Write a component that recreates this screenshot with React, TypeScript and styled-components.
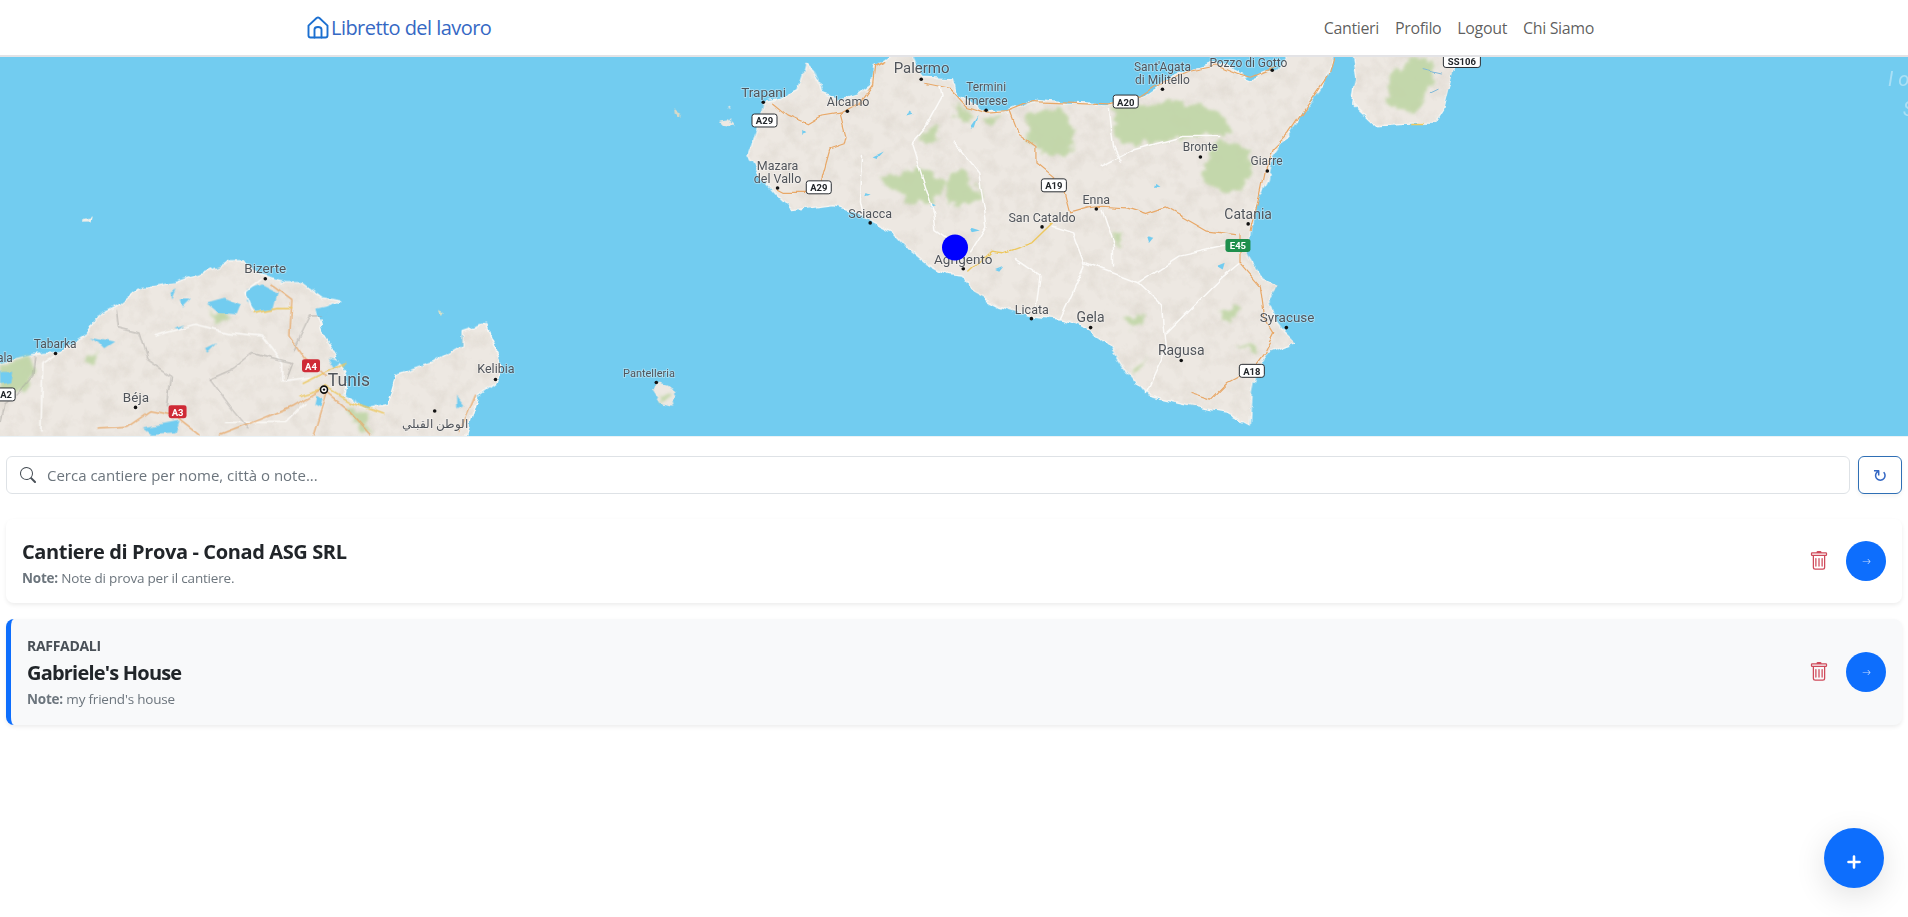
import React from "react";
import styled, { createGlobalStyle } from "styled-components";
import { BsSearch, BsTrash, BsArrowRight, BsPlusLg } from "react-icons/bs";

const Global = createGlobalStyle`
  html, body { margin: 0; padding: 0; background: #fff; }
  body { font-family: "Open Sans", "Noto Sans", "Liberation Sans", sans-serif; color: #212529; }
  * { box-sizing: border-box; }
`;

const Page = styled.div`
  width: 100%;
  min-height: 917px;
  display: flex;
  flex-direction: column;
`;
const Header = styled.header`
  height: 57px;
  background: #fff;
  border-bottom: 2px solid #e3e3e6;
  padding: 0 294px;
`;
const HeaderInner = styled.div`
  height: 55px;
  padding: 0 12px;
  display: flex;
  align-items: center;
  justify-content: space-between;
`;
const Brand = styled.a`
  display: flex;
  align-items: center;
  gap: 2px;
  font-size: 20px;
  letter-spacing: -0.55px;
  color: #3568c4;
  text-decoration: none;
  svg { margin-left: 1px; }
`;
const Nav = styled.nav`
  display: flex;
`;
const NavLink = styled.a`
  padding: 0 8px;
  font-size: 16px;
  letter-spacing: -0.36px;
  color: rgba(0, 0, 0, 0.65);
`;
const MapFrame = styled.section`
  height: 380px;
  background: #72ccf0;
  overflow: hidden;
  border-bottom: 1px solid #eaf2f6;
`;
const MapSvg = styled.svg`
  display: block;
  width: 100%;
  height: 100%;
`;
const Label = styled.text<{ $s: number }>`
  font-family: Roboto, "Liberation Sans", sans-serif;
  font-size: ${(p) => p.$s}px;
  fill: #50545a;
  text-anchor: middle;
  dominant-baseline: central;
  paint-order: stroke;
  stroke: rgba(255, 255, 255, 0.4);
  stroke-width: 1.5px;
`;
const ShieldText = styled.text<{ $light: boolean }>`
  font-family: Roboto, "Liberation Sans", sans-serif;
  font-size: 9.5px;
  font-weight: 700;
  fill: ${(p) => (p.$light ? "#fff" : "#22262a")};
  text-anchor: middle;
  dominant-baseline: central;
`;
const SeaLabel = styled.text`
  font-family: Roboto, "Liberation Sans", sans-serif;
  font-size: 20px;
  font-style: italic;
  fill: rgba(255, 255, 255, 0.4);
`;
const Content = styled.main`
  padding: 19px 6px 0;
  display: flex;
  flex-direction: column;
`;
const SearchRow = styled.div`
  display: flex;
  gap: 8px;
  margin-bottom: 25px;
`;
const SearchBox = styled.label`
  flex: 1;
  height: 38px;
  border: 1px solid #dee2e6;
  border-radius: 6px;
  display: flex;
  align-items: center;
  padding-left: 13px;
  gap: 11px;
  color: #495057;
  font-size: 16px;
  background: #fff;
`;
const SearchInput = styled.input`
  flex: 1;
  border: 0;
  outline: 0;
  padding: 0;
  font: inherit;
  font-size: 15px;
  letter-spacing: 0;
  &::placeholder { color: #6c757d; opacity: 1; }
`;
const RefreshButton = styled.button`
  width: 44px;
  height: 38px;
  background: #fff;
  border: 1px solid #2f6fb5;
  border-radius: 6px;
  color: #3568c4;
  font-size: 18px;
  font-family: "DejaVu Sans", sans-serif;
  padding: 0;
  box-shadow: 0 2px 4px rgba(0, 0, 0, 0.05);
`;
const Card = styled.article<{ $accent?: boolean }>`
  display: flex;
  align-items: center;
  justify-content: space-between;
  padding: 0 16px;
  margin-bottom: 16px;
  border-radius: 8px;
  background: ${(p) => (p.$accent ? "#f8f9fa" : "#fff")};
  border-left: ${(p) => (p.$accent ? "5px solid #0d6efd" : "0")};
  box-shadow: 0 2px 4px rgba(0, 0, 0, 0.075);
  height: ${(p) => (p.$accent ? 106 : 84)}px;
`;
const CardBody = styled.div<{ $offset?: number }>`
  display: flex;
  flex-direction: column;
  padding-top: ${(p) => p.$offset ?? 0}px;
`;
const City = styled.div`
  font-size: 14px;
  font-weight: 700;
  line-height: 20px;
  letter-spacing: -0.3px;
  color: #495057;
  margin-bottom: 5px;
`;
const Title = styled.h3<{ $track: number }>`
  margin: 0 0 4px;
  font-size: 20px;
  line-height: 24px;
  font-weight: 700;
  letter-spacing: ${(p) => p.$track}px;
  color: #212529;
`;
const Note = styled.p`
  margin: 0;
  font-size: 13.5px;
  line-height: 20px;
  letter-spacing: -0.2px;
  color: #6c757d;
  b { font-weight: 700; }
`;
const Actions = styled.div`
  display: flex;
  align-items: center;
  gap: 17px;
`;
const TrashButton = styled.button`
  border: 0;
  background: none;
  padding: 0;
  display: flex;
  color: #cf4a5a;
  font-size: 20px;
`;
const GoButton = styled.button`
  width: 40px;
  height: 40px;
  border-radius: 50%;
  border: 0;
  padding: 0;
  background: #0d6efd;
  color: #cfe2ff;
  font-size: 9px;
  display: flex;
  align-items: center;
  justify-content: center;
`;
const Fab = styled.button`
  position: fixed;
  left: 1824px;
  top: 828px;
  width: 60px;
  height: 60px;
  border-radius: 50%;
  border: 0;
  padding: 8px 0 0;
  background: #0d6efd;
  color: #fff;
  font-size: 16px;
  display: flex;
  align-items: center;
  justify-content: center;
  box-shadow: 0 8px 32px rgba(0, 0, 0, 0.12);
  svg { stroke: #fff; stroke-width: 1.6px; }
`;

const SX = 1 / 2.45;
const SY = 1 / 3;
const P1 = 0;
const P2 = 640;
const P3 = 1268;

const tf = (x: number) => `translate(${x},0) scale(${SX},${SY})`;

const Panel = ({ x, children }: { x: number; children: React.ReactNode }) => <g transform={tf(x)}>{children}</g>;

const LAND = "#ede8e2";
const HILL = "#bfd5a5";
const LAKE = "#72ccf0";

const sicily =
  "300,305 345,295 385,272 398,225 405,190 425,215 445,280 490,300 530,285 565,255 575,190 600,185 640,150 660,150 690,235 765,240 780,290 850,335 900,335 960,300 1050,310 1150,315 1230,290 1290,240 1350,210 1410,185 1470,220 1500,235 1560,205 1600,150 1704,150 1689,220 1639,310 1589,400 1549,470 1539,540 1530,560 1500,640 1495,690 1490,770 1520,830 1564,860 1540,900 1555,960 1579,1000 1604,1030 1539,1060 1510,1120 1500,1180 1495,1275 1440,1240 1350,1220 1240,1190 1200,1130 1150,1040 1100,990 1040,960 960,950 880,920 820,880 790,830 750,825 700,790 650,740 620,700 570,670 520,630 470,615 375,630 340,590 290,520 265,465 285,400";
const calabria = "205,150 215,230 205,310 260,375 350,370 410,370 430,330 450,230 470,150";
const tunisia =
  "-20,1100 80,1070 150,1060 210,1010 240,950 290,920 340,870 430,850 500,820 560,790 600,790 640,830 700,850 740,850 790,895 830,905 800,925 775,940 790,1000 820,1060 830,1090 850,1130 840,1190 900,1230 950,1215 970,1130 1060,1090 1130,1040 1130,1000 1190,975 1210,1040 1230,1100 1215,1150 1170,1190 1130,1350 -20,1350";

const hillsP2 = [
  "945,350 1000,325 1050,345 1065,420 1050,470 990,460 950,420",
  "1155,320 1300,300 1430,340 1450,400 1340,415 1230,430 1170,430",
  "1375,490 1430,420 1490,450 1495,520 1470,580 1410,570 1380,540",
  "585,520 640,530 690,505 750,550 730,600 660,610 610,560",
  "750,520 790,505 820,560 840,590 810,620 755,610",
  "770,310 810,340 805,375 785,360",
  "690,395 720,385 740,425 700,430",
  "840,360 880,350 860,385",
  "1185,960 1230,950 1230,980 1200,990",
  "1200,1120 1245,1070 1225,1110",
  "1160,700 1180,700 1175,745 1165,745",
  "1415,940 1470,925 1440,975",
  "1465,1040 1530,1050 1500,1065",
];
const lakesP2 = [
  "570,470 595,455 580,475",
  "810,380 830,345 820,380",
  "810,680 835,690 815,695",
  "1240,710 1255,715 1245,730",
  "1415,800 1435,790 1430,810",
  "395,390 405,400 395,405",
  "660,335 670,345 655,350",
  "1265,555 1275,565 1262,568",
  "715,615 725,620 712,625",
  "870,815 890,805 880,820",
  "555,580 565,585 552,590",
];
const orangeP2 = [
  "325,310 360,345 410,372 440,350 490,340 505,410 500,435 465,450 445,540 440,575 350,575 335,565",
  "490,340 540,305 570,255 575,200 600,185",
  "700,250 760,265 800,320 850,340 900,335 960,305 1050,310 1150,315 1230,290 1290,240 1350,210 1410,195 1470,225 1500,235 1560,205",
  "905,335 925,400 970,440 970,490 1010,530 1040,570 1055,640 1100,625 1130,620 1190,625 1240,645 1290,625 1340,660 1390,695 1460,705",
  "1470,700 1470,790 1520,860 1530,950 1555,1000 1530,1060 1500,1110 1440,1150 1400,1200 1350,1180",
  "1699,175 1689,220 1639,310 1589,400 1549,450 1530,510 1515,600 1495,690",
];
const yellowP2 = ["808,815 860,755 890,760 960,730 1010,670"];
const whiteP2 = [
  "665,430 700,380 740,290 735,260",
  "665,430 720,640 725,690 760,720",
  "770,430 830,520 850,680 810,760",
  "545,470 540,610 545,640",
  "1010,680 1060,700 1090,800 1030,960",
  "920,780 980,830 970,930",
  "1090,790 1220,850 1320,770 1430,740",
  "1220,850 1280,920 1290,1050 1240,1180",
  "1290,1000 1430,830 1470,790",
  "1130,630 1160,740 1160,800",
  "1130,500 1210,450 1330,410 1420,410",
  "1150,330 1160,440 1180,490",
];
const orangeP1 = [
  "660,850 715,900 710,1010 750,1080 800,1130",
  "240,1290 310,1285 370,1235 430,1250 490,1308",
  "540,1308 620,1270 720,1220 790,1170 860,1240 910,1308",
  "800,1190 770,1308",
  "1165,1185 1125,1300",
];
const yellowP1 = [
  "740,1150 790,1120 850,1090",
  "735,1190 800,1165 860,1210 940,1245",
  "620,940 680,925 715,925",
];
const whiteP1 = [
  "380,1010 480,975 560,1000 640,1010 690,1090 690,1145 760,1135",
  "620,940 600,880 640,840",
  "100,1290 105,1090 135,1065",
  "550,1270 700,1270 750,1210",
];
const greyP1 = [
  "285,930 290,985 340,1000 360,1080 420,1130 410,1220",
  "515,1140 570,1110 620,1060 680,1080 715,1090 700,1140",
  "515,1140 570,1230 610,1290",
  "85,1075 80,1130 40,1190 10,1210 0,1270",
  "720,1050 760,950 790,950",
];
const lakesP1 = [
  "605,870 640,855 680,880 670,925 625,935 605,910",
  "775,925 810,915 800,945 780,950",
  "505,910 550,895 590,915 580,945 535,940",
  "220,1015 280,1030 255,1050 240,1030",
  "440,900 465,900 445,925",
  "415,880 430,870 420,900",
  "805,1075 835,1085 820,1105",
  "775,1190 790,1200 785,1225 770,1215",
  "350,1285 440,1265 430,1300 370,1305",
  "425,985 455,975 435,990",
  "505,1050 530,1035 510,1060",
  "1120,1190 1135,1215 1120,1225",
];

const label = (panel: number, zx: number, zy: number) => ({ x: panel + zx * SX, y: zy * SY });

const labels: [number, number, number, string, number][] = [
  [P2, 690, 204, "Palermo", 15],
  [P2, 303, 275, "Trapani", 13.5],
  [P2, 510, 306, "Alcamo", 12.5],
  [P2, 848, 262, "Termini", 12],
  [P2, 848, 302, "Imerese", 12],
  [P2, 1280, 200, "Sant'Agata", 12],
  [P2, 1280, 240, "di Militello", 12],
  [P3, -48, 190, "Pozzo di Gotto", 12],
  [P2, 1373, 443, "Bronte", 12],
  [P2, 1535, 485, "Giarre", 12],
  [P2, 337, 497, "Mazara", 12.5],
  [P2, 337, 537, "del Vallo", 12.5],
  [P2, 564, 641, "Sciacca", 12.5],
  [P2, 985, 653, "San Cataldo", 12.5],
  [P2, 1118, 600, "Enna", 12.5],
  [P2, 1490, 642, "Catania", 14],
  [P2, 792, 779, "Agrigento", 13.5],
  [P2, 960, 930, "Licata", 12.5],
  [P2, 1104, 952, "Gela", 14],
  [P2, 1326, 1052, "Ragusa", 14],
  [P3, 47, 953, "Syracuse", 13.5],
  [P2, 22, 1124, "Pantelleria", 11],
  [P1, 650, 805, "Bizerte", 13.5],
  [P1, 135, 1033, "Tabarka", 12],
  [P1, 1215, 1108, "Kelibia", 12.5],
  [P1, 855, 1142, "Tunis", 17.5],
  [P1, 333, 1195, "Béja", 13.5],
  [P1, 12, 1076, "ala", 12],
];

const dots: [number, number, number][] = [
  [P2, 689, 238], [P2, 302, 307], [P2, 508, 334], [P2, 848, 331], [P2, 1280, 268], [P2, 1549, 211],
  [P2, 1373, 472], [P2, 1537, 514], [P2, 337, 565], [P2, 564, 670], [P2, 985, 682], [P2, 1118, 628],
  [P2, 1490, 673], [P2, 792, 808], [P2, 959, 958], [P2, 1104, 985], [P2, 1326, 1084], [P3, 45, 985],
  [P2, 40, 1150], [P1, 650, 838], [P1, 136, 1063], [P1, 1214, 1141], [P1, 332, 1225], [P1, 1065, 1236],
];

const shields: [number, number, number, string, string][] = [
  [P2, 305, 362, "A29", "#fff"],
  [P2, 438, 563, "A29", "#fff"],
  [P2, 1014, 557, "A19", "#fff"],
  [P2, 1190, 305, "A20", "#fff"],
  [P2, 1499, 1115, "A18", "#fff"],
  [P2, 1465, 738, "E45", "#1f8f4d"],
  [P1, 762, 1100, "A4", "#cf2a36"],
  [P1, 435, 1238, "A3", "#cf2a36"],
  [P1, 15, 1186, "A2", "#fff"],
  [P3, 475, 183, "SS106", "#fff"],
];

const Lines = ({ items, color, w }: { items: string[]; color: string; w: number }) => (
  <>
    {items.map((p) => (
      <polyline key={p} points={p} fill="none" stroke={color} strokeWidth={w} strokeLinejoin="round" strokeLinecap="round" vectorEffect="non-scaling-stroke" />
    ))}
  </>
);
const Areas = ({ items, color }: { items: string[]; color: string }) => (
  <>
    {items.map((p) => (
      <polygon key={p} points={p} fill={color} />
    ))}
  </>
);

const LandShape = ({ points }: { points: string }) => (
  <polygon points={points} fill={LAND} stroke="#f8f6f3" strokeWidth={1.4} strokeLinejoin="round" vectorEffect="non-scaling-stroke" />
);

const region = { filterUnits: "userSpaceOnUse" as const, x: 0, y: 30, width: 1908, height: 420 };

const TerrainMap = () => (
  <MapSvg viewBox="0 57 1908 380" preserveAspectRatio="none">
    <defs>
      <filter id="coast" {...region}>
        <feTurbulence type="fractalNoise" baseFrequency="0.07" numOctaves="3" seed="4" result="n" />
        <feDisplacementMap in="SourceGraphic" in2="n" scale="9" xChannelSelector="R" yChannelSelector="G" />
      </filter>
      <filter id="green" {...region}>
        <feTurbulence type="fractalNoise" baseFrequency="0.09" numOctaves="3" seed="11" result="n" />
        <feDisplacementMap in="SourceGraphic" in2="n" scale="16" xChannelSelector="R" yChannelSelector="G" />
        <feGaussianBlur stdDeviation="1.8" />
      </filter>
      <filter id="road" {...region}>
        <feTurbulence type="fractalNoise" baseFrequency="0.05" numOctaves="2" seed="9" result="n" />
        <feDisplacementMap in="SourceGraphic" in2="n" scale="7" xChannelSelector="R" yChannelSelector="G" />
      </filter>
      <filter id="relief" {...region}>
        <feTurbulence type="fractalNoise" baseFrequency="0.06" numOctaves="4" seed="7" />
        <feColorMatrix type="matrix" values="0 0 0 0 0.6  0 0 0 0 0.55  0 0 0 0 0.48  2.4 0 0 0 -1.05" />
      </filter>
      <clipPath id="landClip">
        <polygon points={sicily} transform={tf(P2)} />
        <polygon points={tunisia} transform={tf(P1)} />
        <polygon points={calabria} transform={tf(P3)} />
      </clipPath>
    </defs>

    <g filter="url(#coast)">
      <Panel x={P1}>
        <LandShape points={tunisia} />
        <polygon points="1075,935 1085,940 1080,950" fill="#d9e0c6" />
        <polygon points="205,660 225,650 222,665 208,666" fill="#f2efe9" />
      </Panel>
      <Panel x={P2}>
        <LandShape points={sicily} />
        <polygon points="40,1150 28,1170 50,1212 75,1220 90,1195 70,1160" fill={LAND} />
        <polygon points="85,325 100,340 98,355 88,345" fill="#d8d9c6" />
        <polygon points="195,362 215,358 235,382 205,375" fill="#eee9e3" />
        <polygon points="216,315 224,320 220,328" fill="#eee9e3" />
      </Panel>
      <Panel x={P3}>
        <LandShape points={calabria} />
      </Panel>
    </g>

    <rect x="0" y="57" width="1908" height="380" filter="url(#relief)" clipPath="url(#landClip)" opacity="0.28" />

    <g filter="url(#green)" opacity="0.9">
      <Panel x={P1}>
        <polygon points="0,1095 70,1075 85,1110 60,1170 20,1185 0,1190" fill={HILL} />
        <polygon points="510,930 550,945 565,960 535,965" fill={HILL} />
        <polygon points="215,1070 235,1065 238,1095 220,1095" fill={HILL} />
        <polygon points="850,1230 890,1240 915,1300 880,1290" fill={HILL} />
      </Panel>
      <Panel x={P2}>
        <Areas items={hillsP2} color={HILL} />
        <polygon points="55,1180 75,1185 72,1205 55,1200" fill={HILL} />
      </Panel>
      <Panel x={P3}>
        <polygon points="285,300 300,230 350,172 410,172 400,250 360,340 310,320" fill={HILL} />
      </Panel>
    </g>

    <g filter="url(#road)">
      <Panel x={P2}>
        <Areas items={lakesP2} color={LAKE} />
        <Lines items={whiteP2} color="#fbfaf8" w={1.5} />
        <Lines items={orangeP2} color="#e8a868" w={1.2} />
        <Lines items={yellowP2} color="#edc85f" w={1.4} />
      </Panel>
      <Panel x={P1}>
        <Areas items={lakesP1} color={LAKE} />
        <polygon points="0,1115 30,1115 25,1150 0,1155" fill={LAKE} />
        <Lines items={whiteP1} color="#fbfaf8" w={1.5} />
        <Lines items={greyP1} color="#a5a29e" w={0.8} />
        <Lines items={orangeP1} color="#e8a868" w={1.2} />
        <Lines items={yellowP1} color="#edc85f" w={1.4} />
      </Panel>
      <Panel x={P3}>
        <Lines items={["380,212 425,225", "395,275 412,265"]} color="#7fb8d8" w={1} />
        <Lines items={["350,374 380,374"]} color="#edc85f" w={1.4} />
      </Panel>
    </g>

    {dots.map(([p, x, y]) => {
      const c = label(p, x, y);
      return <circle key={`${p}-${x}-${y}`} cx={c.x} cy={c.y} r={1.8} fill="#111" />;
    })}
    <circle cx={324} cy={390.5} r={3.5} fill="#fff" stroke="#111" strokeWidth={1.6} />
    <circle cx={324} cy={390.5} r={1.2} fill="#111" />

    {labels.map(([p, x, y, t, s]) => {
      const c = label(p, x, y);
      return (
        <Label key={`${t}-${x}`} x={c.x} y={c.y} $s={s}>
          {t}
        </Label>
      );
    })}
    <Label x={435} y={425} $s={12}>الوطن القبلي</Label>

    {shields.map(([p, x, y, t, fill]) => {
      const c = label(p, x, y);
      const light = fill !== "#fff";
      const w = t.length > 3 ? 37 : t.length === 2 ? 18 : 25;
      return (
        <g key={`${t}-${x}`}>
          <rect x={c.x - w / 2} y={c.y - 6.5} width={w} height={13} rx={2.5} fill={fill} stroke={light ? "none" : "#2a2e33"} strokeWidth={1} />
          <ShieldText x={c.x} y={c.y + 0.5} $light={light}>
            {t}
          </ShieldText>
        </g>
      );
    })}

    <SeaLabel x={1888} y={86}>I o</SeaLabel>
    <SeaLabel x={1903} y={116}>S</SeaLabel>

    <circle cx={955} cy={248} r={13} fill="#0000ff" />
  </MapSvg>
);

const HouseIcon = () => (
  <svg width="22" height="23" viewBox="0 0 22 23" fill="none" stroke="#1b6fd0" strokeWidth="1.9" strokeLinejoin="round" strokeLinecap="round">
    <path d="M1.5 9.6 L9.6 2 Q11 1 12.4 2 L20.5 9.6 V19.5 Q20.5 21.5 18.5 21.5 H3.5 Q1.5 21.5 1.5 19.5 Z" />
    <path d="M7.5 21.5 V13.5 Q7.5 11 11 11 Q14.5 11 14.5 13.5 V21.5" />
  </svg>
);

export default function App() {
  return (
    <>
      <Global />
      <Page>
        <Header>
          <HeaderInner>
            <Brand>
              <HouseIcon />
              Libretto del lavoro
            </Brand>
            <Nav>
              <NavLink>Cantieri</NavLink>
              <NavLink>Profilo</NavLink>
              <NavLink>Logout</NavLink>
              <NavLink>Chi Siamo</NavLink>
            </Nav>
          </HeaderInner>
        </Header>
        <MapFrame>
          <TerrainMap />
        </MapFrame>
        <Content>
          <SearchRow>
            <SearchBox>
              <BsSearch />
              <SearchInput placeholder="Cerca cantiere per nome, città o note..." />
            </SearchBox>
            <RefreshButton>↻</RefreshButton>
          </SearchRow>
          <Card>
            <CardBody $offset={5}>
              <Title $track={-0.38}>Cantiere di Prova - Conad ASG SRL</Title>
              <Note>
                <b>Note:</b> Note di prova per il cantiere.
              </Note>
            </CardBody>
            <Actions>
              <TrashButton>
                <BsTrash />
              </TrashButton>
              <GoButton>
                <BsArrowRight />
              </GoButton>
            </Actions>
          </Card>
          <Card $accent>
            <CardBody>
              <City>RAFFADALI</City>
              <Title $track={-0.8}>Gabriele's House</Title>
              <Note>
                <b>Note:</b> my friend's house
              </Note>
            </CardBody>
            <Actions>
              <TrashButton>
                <BsTrash />
              </TrashButton>
              <GoButton>
                <BsArrowRight />
              </GoButton>
            </Actions>
          </Card>
        </Content>
        <Fab>
          <BsPlusLg />
        </Fab>
      </Page>
    </>
  );
}
